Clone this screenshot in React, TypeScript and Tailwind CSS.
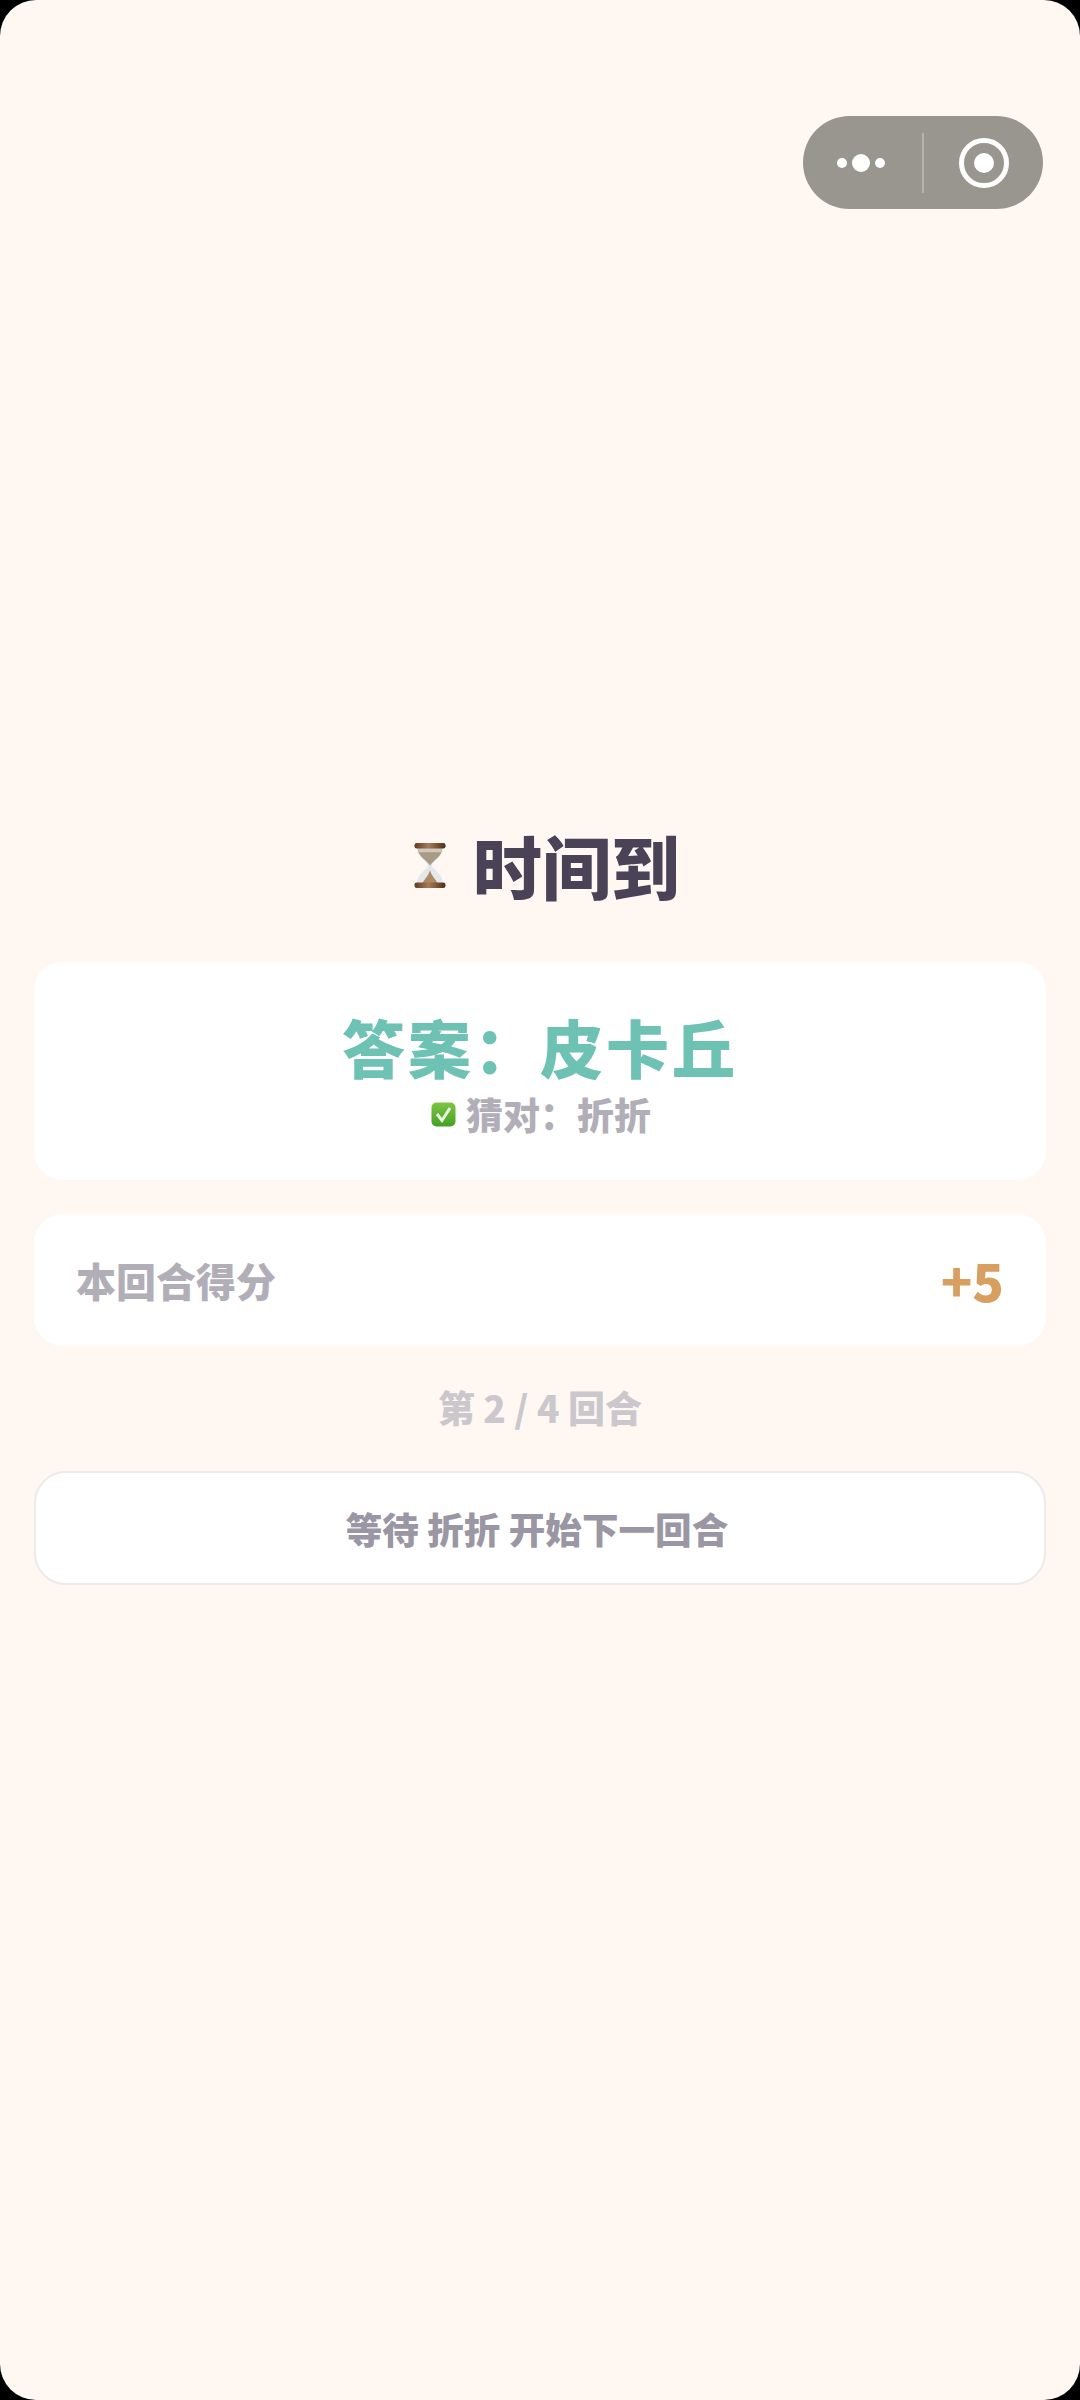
import React from 'react';

const FONT = '"Noto Sans CJK SC", "Noto Sans", sans-serif';

const Hourglass = () => (
  <svg width="32" height="47" viewBox="0 0 34 50" className="shrink-0">
    <defs>
      <linearGradient id="wood" x1="0" x2="1" y1="0" y2="0">
        <stop offset="0" stopColor="#5f3a20" />
        <stop offset="0.45" stopColor="#a87a58" />
        <stop offset="1" stopColor="#4f2c16" />
      </linearGradient>
    </defs>
    <path d="M3 5 C3 17 14 20 15 25 C14 30 3 33 3 45 L31 45 C31 33 20 30 19 25 C20 20 31 17 31 5 Z" fill="#e4e8ec" />
    <path d="M4 7 L30 7 C30 15 21 19 17 25 C13 19 4 15 4 7 Z" fill="#a99a85" />
    <path d="M4 7 L30 7 L29 11 L5 11 Z" fill="#cfc8bb" />
    <path d="M9 44 C11 39 15 37 17 30 C19 37 23 39 25 44 Z" fill="#a98a63" />
    <rect x="0.5" y="1" width="33" height="6" rx="2.5" fill="url(#wood)" />
    <rect x="0.5" y="43" width="33" height="6" rx="2.5" fill="url(#wood)" />
  </svg>
);

const CheckBox = () => (
  <svg width="25" height="25" viewBox="0 0 25 25" className="shrink-0">
    <defs>
      <linearGradient id="green" x1="0" x2="0" y1="0" y2="1">
        <stop offset="0" stopColor="#7cc543" />
        <stop offset="1" stopColor="#46a024" />
      </linearGradient>
    </defs>
    <rect x="0.5" y="0.5" width="24" height="24" rx="5" fill="url(#green)" />
    <path d="M6 12 L11 18.5 L19 6" fill="none" stroke="#e9f3e2" strokeWidth="3" />
  </svg>
);

export default function App() {
  return (
    <div className="bg-black">
      <div
        className="relative min-h-[2400px] rounded-[36px] bg-[#fff8f2] px-[34px] pt-[821px]"
        style={{ fontFamily: FONT }}
      >
        {/* mini program capsule */}
        <div className="absolute right-[37px] top-[116px] flex h-[93px] w-[240px] items-center rounded-full bg-[#999690]">
          <div className="flex w-[119px] items-center justify-center gap-[5px] pr-[3px]">
            <span className="h-[10px] w-[10px] rounded-full bg-white" />
            <span className="h-[18px] w-[18px] rounded-full bg-white" />
            <span className="h-[10px] w-[10px] rounded-full bg-white" />
          </div>
          <div className="h-[60px] w-[2px] bg-[#b5b2ad]" />
          <div className="flex flex-1 items-center justify-center">
            <div className="flex h-[50px] w-[50px] items-center justify-center rounded-full border-[5px] border-white">
              <span className="h-[20px] w-[20px] rounded-full bg-white" />
            </div>
          </div>
        </div>

        <div className="flex h-[88px] items-center justify-center gap-[27px] pl-[14px]">
          <Hourglass />
          <h1 className="text-[69px] leading-none font-black text-[#4a4358]">时间到</h1>
        </div>

        <div className="mt-[53px] flex h-[218px] flex-col items-center justify-center rounded-[29px] bg-white">
          <div className="text-[63px] leading-[86px] font-black tracking-[3px] text-[#6dc2b3]">答案：皮卡丘</div>
          <div className="flex items-center gap-[10px] pl-[2px] text-[37px] leading-[50px] font-black text-[#b1aeb8]">
            <CheckBox />
            <span>猜对：折折</span>
          </div>
        </div>

        <div className="mt-[34px] flex h-[132px] items-center justify-between rounded-[29px] bg-white pl-[42px] pr-[42px]">
          <span className="text-[40px] font-black text-[#b1aeb8]">本回合得分</span>
          <span className="text-[52px] font-black text-[#d99f60]">+5</span>
        </div>

        <div className="mt-[33px] text-center text-[37px] leading-[56px] font-black text-[#cbc8cd]">第 2 / 4 回合</div>

        <div className="mt-[36px] flex h-[114px] items-center justify-center rounded-[32px] border-2 border-[#eeeaea] bg-white pr-[6px] pt-[2px] text-[36.6px] font-black text-[#9a96a3]">
          等待 折折 开始下一回合
        </div>
      </div>
    </div>
  );
}
